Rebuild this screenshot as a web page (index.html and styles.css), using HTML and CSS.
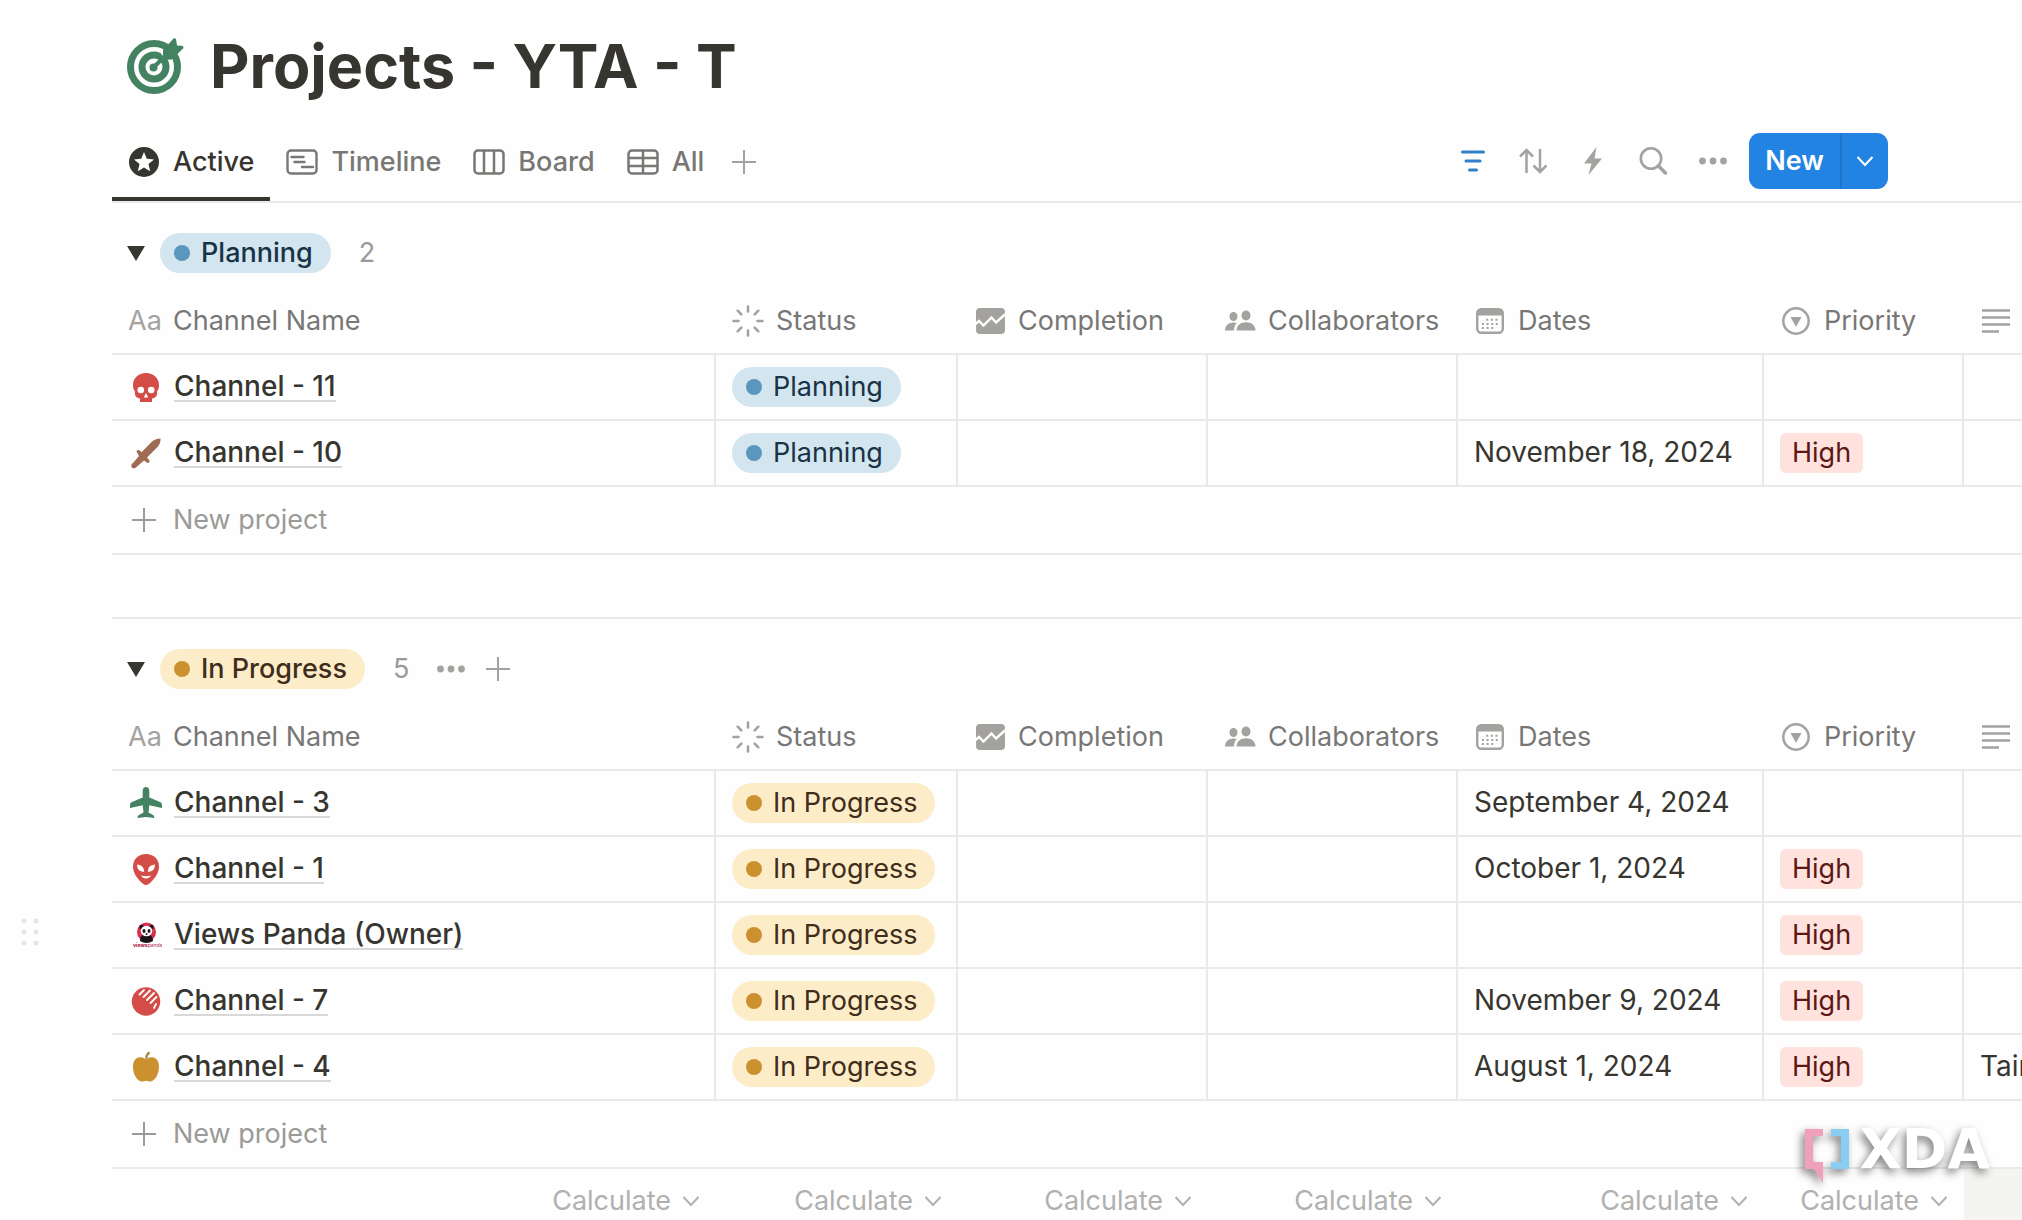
FILE: index.html
```
<!DOCTYPE html>
<html lang="en">
<head>
    <meta charset="UTF-8">
    <meta name="viewport" content="width=device-width, initial-scale=1.0">
    <title>Projects - YTA - T</title>
    <link rel="stylesheet" href="styles.css">
</head>
<body>
    <!-- Shared icons -->
    <svg class="sprite" aria-hidden="true">
        <symbol id="i-plus" viewBox="0 0 24 24"><path d="M12 0v24M0 12h24" fill="none" stroke="currentColor" stroke-width="2"/></symbol>
        <symbol id="i-dots" viewBox="0 0 28 28"><g fill="currentColor"><circle cx="3.5" cy="14" r="3.4"/><circle cx="14" cy="14" r="3.4"/><circle cx="24.5" cy="14" r="3.4"/></g></symbol>
        <symbol id="i-chevron" viewBox="0 0 18 18"><path d="M1.5 5l7.500 8 7.500-8" fill="none" stroke="currentColor" stroke-width="2"/></symbol>
        <symbol id="i-status" viewBox="0 0 32 32"><path d="M16 1.500v5M16 25.500v5M1.500 16h5M25.500 16h5M5.700 5.700l3.600 3.600M22.700 22.700l3.600 3.600M5.700 26.300l3.600-3.600M22.700 9.300l3.600-3.600" fill="none" stroke="currentColor" stroke-width="2.600" stroke-linecap="round"/></symbol>
        <symbol id="i-chart" viewBox="0 0 32 32"><rect x="2" y="3" width="29" height="26" rx="4" fill="currentColor"/><path d="M1 19.500l4-3.500 4.500 4.500 8-8 4.500 5L31.500 9" fill="none" stroke="#fff" stroke-width="2.400"/></symbol>
        <symbol id="i-people" viewBox="0 0 32 32"><g fill="currentColor"><ellipse cx="9.500" cy="11.500" rx="4" ry="4.500"/><ellipse cx="22" cy="10.500" rx="4.500" ry="5"/><path d="M1 25.500c0-5 3.500-8 8.500-8 1.500 0 2.500.2 3.500.6-2 1.600-3 4-3 7.400z"/><path d="M12.500 25.500c0-5 4-8.300 9.500-8.300s9.500 3.300 9.500 8.300z"/></g></symbol>
        <symbol id="i-calendar" viewBox="0 0 32 32"><rect x="3.200" y="4.200" width="25.600" height="23.600" rx="4" fill="none" stroke="currentColor" stroke-width="2.400"/><path d="M3 10.500V8a4 4 0 0 1 4-4h18a4 4 0 0 1 4 4v2.500z" fill="currentColor"/><path d="M12.200 14.700h12M8 18.900h16.500M8 23.100h12.500" fill="none" stroke="currentColor" stroke-width="2" stroke-dasharray="2 2.600"/></symbol>
        <symbol id="i-select" viewBox="0 0 32 32"><circle cx="16" cy="16" r="12.700" fill="none" stroke="currentColor" stroke-width="2.500"/><path d="M10.500 12h11L16 22z" fill="currentColor"/></symbol>
        <symbol id="i-text" viewBox="0 0 32 32"><path d="M2 5.500h28M2 12.500h28M2 19.500h28M2 26.500h17" fill="none" stroke="currentColor" stroke-width="2.400"/></symbol>
    </svg>

    <main class="page">
        <header class="page-header">
            <svg class="page-icon" viewBox="0 0 56 56" aria-hidden="true">
                <g fill="none" stroke="#448361">
                    <circle cx="27" cy="29" r="23.500" stroke-width="7"/>
                    <circle cx="27" cy="29" r="12" stroke-width="7"/>
                </g>
                <circle cx="26.500" cy="29.500" r="4" fill="#448361"/>
                <path d="M35 17l11-9" stroke="#fff" stroke-width="4"/>
                <path d="M27 29L43 13" stroke="#448361" stroke-width="4"/>
                <path d="M36 22V12L47 0l2 1 1 6.500 6 .5.500 2L45 21.500z" fill="#448361"/>
            </svg>
            <h1>Projects - YTA - T</h1>
        </header>

        <div class="toolbar">
            <nav class="tabs">
                <button class="tab active" type="button">
                    <svg class="tab-icon star" viewBox="0 0 32 32"><circle cx="16" cy="16" r="15" fill="currentColor"/><path d="M16 6l2.800 6.800 7.200.6-5.500 4.700 1.700 7.100L16 21.400l-6.200 3.800 1.700-7.100L6 13.400l7.200-.6z" fill="#fff"/></svg>
                    Active
                </button>
                <button class="tab" type="button">
                    <svg class="tab-icon" viewBox="0 0 32 32"><g fill="none" stroke="currentColor" stroke-width="2.400"><rect x="1.500" y="4.500" width="29" height="23" rx="3.500"/><path d="M5.500 11h12M8.500 16h10M16 21h11" stroke-linecap="round"/></g></svg>
                    Timeline
                </button>
                <button class="tab" type="button">
                    <svg class="tab-icon" viewBox="0 0 32 32"><g fill="none" stroke="currentColor" stroke-width="2.500"><rect x="1.500" y="4.500" width="29" height="23" rx="3.500"/><path d="M11 4.500v23M21 4.500v23"/></g></svg>
                    Board
                </button>
                <button class="tab" type="button">
                    <svg class="tab-icon" viewBox="0 0 32 32"><g fill="none" stroke="currentColor" stroke-width="2.500"><rect x="1.500" y="4.500" width="29" height="23" rx="3.500"/><path d="M1.500 12h29M1.500 20h29M16 4.500v23"/></g></svg>
                    All
                </button>
                <button class="icon-button add-view" type="button" aria-label="Add view"><svg class="plus"><use href="#i-plus"/></svg></button>
            </nav>
            <div class="actions">
                <button class="icon-button filter" type="button" aria-label="Filter"><svg viewBox="0 0 28 28"><path d="M3.500 5h21M7 14h14M10.500 23h7" fill="none" stroke="currentColor" stroke-width="3" stroke-linecap="round"/></svg></button>
                <button class="icon-button" type="button" aria-label="Sort"><svg viewBox="0 0 28 28"><path d="M7.500 26V3M1 9.500L7.500 3 14 9.500M21 2v23M14.500 18.500L21 25l6.500-6.500" fill="none" stroke="currentColor" stroke-width="2.500"/></svg></button>
                <button class="icon-button" type="button" aria-label="Automations"><svg viewBox="0 0 28 28"><path d="M17.500 0L5 16.500h7.500L9.500 28 23 11.500h-7.500z" fill="currentColor"/></svg></button>
                <button class="icon-button" type="button" aria-label="Search"><svg viewBox="0 0 28 28"><g fill="none" stroke="currentColor"><circle cx="12" cy="11.500" r="10.200" stroke-width="2.600"/><path d="M19.500 19l7 7" stroke-width="3.600" stroke-linecap="round"/></g></svg></button>
                <button class="icon-button" type="button" aria-label="More"><svg><use href="#i-dots"/></svg></button>
                <div class="new-group">
                    <button class="new-button" type="button">New</button>
                    <button class="new-menu" type="button" aria-label="New from template"><svg class="chevron"><use href="#i-chevron"/></svg></button>
                </div>
            </div>
        </div>

        <section class="group">
            <div class="group-header">
                <button class="toggle" type="button" aria-label="Collapse group"></button>
                <span class="pill blue">Planning</span>
                <span class="count">2</span>
            </div>
            <table class="database">
                <colgroup>
                    <col class="col-name"><col class="col-status"><col class="col-completion"><col class="col-people"><col class="col-dates"><col class="col-priority"><col>
                </colgroup>
                <thead>
                    <tr>
                        <th><div class="prop"><span class="aa">Aa</span>Channel Name</div></th>
                        <th><div class="prop"><svg><use href="#i-status"/></svg>Status</div></th>
                        <th><div class="prop"><svg><use href="#i-chart"/></svg>Completion</div></th>
                        <th><div class="prop"><svg><use href="#i-people"/></svg>Collaborators</div></th>
                        <th><div class="prop"><svg><use href="#i-calendar"/></svg>Dates</div></th>
                        <th><div class="prop"><svg><use href="#i-select"/></svg>Priority</div></th>
                        <th><div class="prop"><svg><use href="#i-text"/></svg></div></th>
                    </tr>
                </thead>
                <tbody>
                    <tr>
                        <td><div class="name"><svg viewBox="0 0 32 32"><path d="M16 2C8.500 2 3 7 3 14c0 3 .7 5 2 6.500-.6 4 1 6.500 5 7V31h12v-3.500c4-.5 5.600-3 5-7 1.300-1.500 2-3.500 2-6.500 0-7-5.500-12-13-12z" fill="#d44c47"/><g fill="#fff"><circle cx="10.800" cy="19" r="3.300"/><circle cx="21.200" cy="19" r="3.300"/><path d="M16 22l2.200 4.500h-4.400z"/></g></svg><a href="#">Channel - 11</a></div></td>
                        <td><span class="pill blue">Planning</span></td>
                        <td></td><td></td><td></td><td></td><td></td>
                    </tr>
                    <tr>
                        <td><div class="name"><svg viewBox="0 0 32 32"><path d="M30.500 1.500c.2 3-.6 5.500-2.500 8L17 20.500l2.500 3c.3 1.500-.5 2.500-2 2.500L14 23.500 6.500 30c-1 1.500-4 2-5 0-.8-1.800.5-3.500 2-4.500L9 19l-2.500-4.500c.3-1.500 1.500-2 3-1.200l2 2L22 4.500C24.500 2.500 27.500 1.500 30.500 1.500z" fill="#9f6b53"/></svg><a href="#">Channel - 10</a></div></td>
                        <td><span class="pill blue">Planning</span></td>
                        <td></td><td></td>
                        <td>November 18, 2024</td>
                        <td><span class="tag">High</span></td>
                        <td></td>
                    </tr>
                    <tr class="new-row">
                        <td colspan="7"><button type="button"><svg class="plus"><use href="#i-plus"/></svg>New project</button></td>
                    </tr>
                </tbody>
            </table>
        </section>

        <section class="group">
            <div class="group-header">
                <button class="toggle" type="button" aria-label="Collapse group"></button>
                <span class="pill yellow">In Progress</span>
                <span class="count">5</span>
                <button class="icon-button" type="button" aria-label="Group options"><svg><use href="#i-dots"/></svg></button>
                <button class="icon-button" type="button" aria-label="Add to group"><svg class="plus"><use href="#i-plus"/></svg></button>
            </div>
            <table class="database">
                <colgroup>
                    <col class="col-name"><col class="col-status"><col class="col-completion"><col class="col-people"><col class="col-dates"><col class="col-priority"><col>
                </colgroup>
                <thead>
                    <tr>
                        <th><div class="prop"><span class="aa">Aa</span>Channel Name</div></th>
                        <th><div class="prop"><svg><use href="#i-status"/></svg>Status</div></th>
                        <th><div class="prop"><svg><use href="#i-chart"/></svg>Completion</div></th>
                        <th><div class="prop"><svg><use href="#i-people"/></svg>Collaborators</div></th>
                        <th><div class="prop"><svg><use href="#i-calendar"/></svg>Dates</div></th>
                        <th><div class="prop"><svg><use href="#i-select"/></svg>Priority</div></th>
                        <th><div class="prop"><svg><use href="#i-text"/></svg></div></th>
                    </tr>
                </thead>
                <tbody>
                    <tr>
                        <td><div class="name"><svg viewBox="0 0 32 32"><path d="M16 0c2 0 3.300 1.500 3.300 4v6.500L30 15c1.500.7 2 1.800 2 3.500v2.500l-12.700-2.700-.8 7.200 4.500 2.500c1 .6 1.300 1.300 1.300 3L16 30l-8.300 1c0-1.700.3-2.400 1.300-3l4.500-2.500-.8-7.200L0 21v-2.500C0 16.800.5 15.700 2 15l10.700-4.500V4c0-2.500 1.300-4 3.300-4z" fill="#448361"/></svg><a href="#">Channel - 3</a></div></td>
                        <td><span class="pill yellow">In Progress</span></td>
                        <td></td><td></td>
                        <td>September 4, 2024</td>
                        <td></td><td></td>
                    </tr>
                    <tr>
                        <td><div class="name"><svg viewBox="0 0 32 32"><path d="M16 1C8.500 1 3 6 3 13.500 3 21 9 27.500 13 30.800c2 1.600 4 1.600 6 0 4-3.300 10-9.800 10-17.300C29 6 23.500 1 16 1z" fill="#d44c47"/><g fill="#fff"><path d="M7 11.500c4.500.3 7 2.800 7.200 7.300C9.500 18.800 7.200 16.300 7 11.500zM25 11.500c-4.500.3-7 2.800-7.200 7.300 4.700 0 7-2.500 7.200-7.300z"/><path d="M11 22.500c3.300 1 6.700 1 10 0-1 2-2.800 3-5 3s-4-1-5-3z"/></g></svg><a href="#">Channel - 1</a></div></td>
                        <td><span class="pill yellow">In Progress</span></td>
                        <td></td><td></td>
                        <td>October 1, 2024</td>
                        <td><span class="tag">High</span></td>
                        <td></td>
                    </tr>
                    <tr>
                        <td>
                            <svg class="drag-handle" viewBox="0 0 18 30" aria-hidden="true"><g fill="currentColor"><circle cx="3" cy="4" r="2.500"/><circle cx="15" cy="4" r="2.500"/><circle cx="3" cy="15" r="2.500"/><circle cx="15" cy="15" r="2.500"/><circle cx="3" cy="26" r="2.500"/><circle cx="15" cy="26" r="2.500"/></g></svg>
                            <div class="name"><svg viewBox="0 0 32 32"><circle cx="16.500" cy="13" r="9.500" fill="#d9304f"/><path d="M10 22c0-4 2-7 6.500-7s6.500 3 6.500 7c-4 2.500-9 2.500-13 0z" fill="#1c1418"/><circle cx="11.500" cy="8" r="2.200" fill="#1c1418"/><circle cx="21.500" cy="8" r="2.200" fill="#1c1418"/><ellipse cx="16.500" cy="12" rx="5.800" ry="5.200" fill="#fff"/><g fill="#1c1418"><ellipse cx="14" cy="12" rx="1.500" ry="2"/><ellipse cx="19" cy="12" rx="1.500" ry="2"/><circle cx="16.500" cy="15" r="1"/></g><text x="3" y="28" font-size="5" font-weight="800" fill="#b3294f">views<tspan font-weight="400">panda</tspan></text></svg><a href="#">Views Panda (Owner)</a></div>
                        </td>
                        <td><span class="pill yellow">In Progress</span></td>
                        <td></td><td></td><td></td>
                        <td><span class="tag">High</span></td>
                        <td></td>
                    </tr>
                    <tr>
                        <td><div class="name"><svg viewBox="0 0 32 32"><circle cx="16" cy="16.500" r="14.200" fill="#d44c47"/><path d="M9.500 9.500L14 5M13.500 12L20 5.500M17 15l7-7M20.500 18l6-6M24 23l2-4" fill="none" stroke="#fff" stroke-width="1.800" stroke-linecap="round"/></svg><a href="#">Channel - 7</a></div></td>
                        <td><span class="pill yellow">In Progress</span></td>
                        <td></td><td></td>
                        <td>November 9, 2024</td>
                        <td><span class="tag">High</span></td>
                        <td></td>
                    </tr>
                    <tr>
                        <td><div class="name"><svg viewBox="0 0 32 32"><path d="M16 8.500c2-1.700 4-2.300 6-2.300 4.500.3 7 4 7 9.300 0 7.500-4 14.500-8.500 15-1.700.2-2.800-.8-4.500-.8s-2.800 1-4.500.8C7 30 3 23 3 15.500c0-5.300 2.500-9 7-9.300 2 0 4 .6 6 2.300z" fill="#cb912f"/><path d="M15.300 8c-.3-3 .8-5.800 3.200-7.500l2 1.800c-2 1.400-3 3-3.200 5.700z" fill="#a58a3c"/></svg><a href="#">Channel - 4</a></div></td>
                        <td><span class="pill yellow">In Progress</span></td>
                        <td></td><td></td>
                        <td>August 1, 2024</td>
                        <td><span class="tag">High</span></td>
                        <td>Tain</td>
                    </tr>
                    <tr class="new-row">
                        <td colspan="7"><button type="button"><svg class="plus"><use href="#i-plus"/></svg>New project</button></td>
                    </tr>
                </tbody>
                <tfoot>
                    <tr>
                        <td><button type="button">Calculate<svg class="chevron"><use href="#i-chevron"/></svg></button></td>
                        <td><button type="button">Calculate<svg class="chevron"><use href="#i-chevron"/></svg></button></td>
                        <td><button type="button">Calculate<svg class="chevron"><use href="#i-chevron"/></svg></button></td>
                        <td><button type="button">Calculate<svg class="chevron"><use href="#i-chevron"/></svg></button></td>
                        <td><button type="button">Calculate<svg class="chevron"><use href="#i-chevron"/></svg></button></td>
                        <td><button type="button">Calculate<svg class="chevron"><use href="#i-chevron"/></svg></button></td>
                        <td class="hovered"></td>
                    </tr>
                </tfoot>
            </table>
        </section>

        <div class="watermark">
            <svg viewBox="0 0 48 56" aria-hidden="true">
                <path d="M20 1H2v40h9l9 14V34h-10V8h10z" fill="#f0a0b8"/>
                <path d="M28 1h18v40H28v-7h10V8H28z" fill="#8acdf2"/>
            </svg>
            <span>XDA</span>
        </div>
    </main>
</body>
</html>
```
FILE: styles.css
```
* {
    box-sizing: border-box;
}

body {
    margin: 0;
    font-family: Inter, "Liberation Sans", sans-serif;
    font-size: 27px;
    line-height: 40px;
    color: #37352f;
    background-color: #fefefe;
}

button {
    margin: 0;
    padding: 0;
    border: none;
    background: none;
    font: inherit;
    color: inherit;
    cursor: pointer;
}

svg {
    display: block;
    flex: none;
}

.sprite {
    position: absolute;
    width: 0;
    height: 0;
}

.page {
    position: relative;
    height: 100vh;
    padding-left: 112px;
    overflow: hidden;
}

.page-header {
    display: flex;
    align-items: center;
    gap: 27px;
    padding: 28px 0 22px 15px;
}

.page-icon {
    width: 56px;
    height: 56px;
    overflow: visible;
}

h1 {
    margin: 0;
    font-size: 61px;
    line-height: 76px;
    font-weight: 700;
}

/* Views and actions */
.toolbar {
    display: flex;
    justify-content: space-between;
    height: 77px;
    padding-right: 134px;
    border-bottom: 2px solid #e9e9e7;
}

.tabs {
    display: flex;
    color: #787774;
    font-weight: 500;
}

.tab {
    display: flex;
    align-items: center;
    gap: 13px;
    padding: 0 16px;
    border-bottom: 4px solid transparent;
}

.tab.active {
    color: #37352f;
    border-bottom-color: #37352f;
}

.tab-icon {
    width: 32px;
    height: 32px;
}

.actions {
    display: flex;
    align-items: center;
    gap: 32px;
    padding-bottom: 6px;
}

.icon-button {
    color: #a3a29f;
}

.icon-button svg {
    width: 28px;
    height: 28px;
}

.icon-button.filter {
    color: #2f7fc9;
}

.add-view {
    padding: 0 12px 4px;
}

.plus,
.icon-button .plus {
    width: 24px;
    height: 24px;
}

.chevron {
    width: 18px;
    height: 18px;
}

.new-group {
    display: flex;
    height: 56px;
    margin-left: -10px;
    border-radius: 11px;
    background-color: #2383e2;
    color: #fff;
    font-weight: 600;
}

.new-button {
    padding: 0 16px;
}

.new-menu {
    padding: 0 14px;
    border-left: 2px solid #1f74ca;
}

/* Groups */
.group-header {
    display: flex;
    align-items: center;
    padding: 30px 0 14px 15px;
    font-weight: 500;
}

.group + .group {
    margin-top: 62px;
    border-top: 2px solid #e9e9e7;
}

.toggle {
    margin-right: 15px;
    border-top: 15px solid #37352f;
    border-left: 9px solid transparent;
    border-right: 9px solid transparent;
}

.count {
    padding: 0 28px;
    color: #9b9a97;
    font-weight: 400;
}

.group-header .icon-button {
    margin-right: 21px;
}

.pill {
    display: inline-flex;
    align-items: center;
    height: 40px;
    padding: 0 18px 0 14px;
    gap: 11px;
    border-radius: 20px;
    vertical-align: middle;
}

.pill::before {
    content: "";
    width: 16px;
    height: 16px;
    border-radius: 50%;
}

.blue {
    background-color: #d3e5ef;
    color: #183347;
}

.blue::before {
    background-color: #5b97bd;
}

.yellow {
    background-color: #fdecc8;
    color: #402c1b;
}

.yellow::before {
    background-color: #cb912f;
}

.tag {
    display: inline-block;
    padding: 0 12px;
    border-radius: 6px;
    background-color: #ffe2dd;
    color: #5d1715;
    vertical-align: middle;
}

/* Tables */
.database {
    width: 100%;
    table-layout: fixed;
    border-collapse: separate;
    border-spacing: 0;
}

.col-name {
    width: 604px;
}

.col-status {
    width: 242px;
}

.col-completion,
.col-people {
    width: 250px;
}

.col-dates {
    width: 306px;
}

.col-priority {
    width: 200px;
}

.database th,
.database td {
    height: 66px;
    padding: 0 16px;
    border-bottom: 2px solid #e9e9e7;
    text-align: left;
    white-space: nowrap;
}

.database th {
    height: 68px;
    padding-top: 2px;
    font-weight: 400;
    color: #787774;
}

.database tbody td {
    padding-bottom: 2px;
    border-right: 2px solid #e9e9e7;
    font-size: 28px;
}

.database td:last-child {
    border-right: none;
}

.database .pill,
.database .tag {
    font-size: 27px;
}

.prop {
    display: flex;
    align-items: center;
    gap: 12px;
}

.prop svg {
    width: 32px;
    height: 32px;
    color: #a3a29f;
}

.aa {
    width: 33px;
    color: #a3a29f;
}

.name {
    display: flex;
    align-items: center;
    gap: 12px;
    padding: 2px 0 0 2px;
}

.name svg {
    width: 32px;
    height: 32px;
}

.name a {
    color: inherit;
    font-weight: 500;
    line-height: 28px;
    text-decoration: none;
    border-bottom: 2px solid #d8d8d6;
}

.drag-handle {
    position: absolute;
    left: 21px;
    width: 18px;
    height: 30px;
    color: #e6e6e5;
}

.database .new-row td {
    height: 68px;
    padding-bottom: 0;
    border-right: none;
}

.new-row button {
    display: flex;
    align-items: center;
    gap: 17px;
    padding-left: 4px;
    color: #9b9a97;
    font-size: 27px;
}

.database tfoot td {
    height: 68px;
    padding-bottom: 4px;
    border: none;
}

.database tfoot .hovered {
    background-color: #f4f4f3;
}

tfoot button {
    display: flex;
    align-items: center;
    gap: 11px;
    margin-left: auto;
    color: #b0b0ae;
}

/* Logo over the bottom right corner */
.watermark {
    position: absolute;
    right: 32px;
    bottom: 36px;
    display: flex;
    gap: 8px;
    filter: drop-shadow(-3px 4px 4px rgba(0, 0, 0, 0.5));
}

.watermark svg {
    width: 48px;
    height: 56px;
}

.watermark span {
    color: #fff;
    font-family: "DejaVu Sans", sans-serif;
    font-size: 55px;
    line-height: 43px;
    font-weight: 700;
}
```
